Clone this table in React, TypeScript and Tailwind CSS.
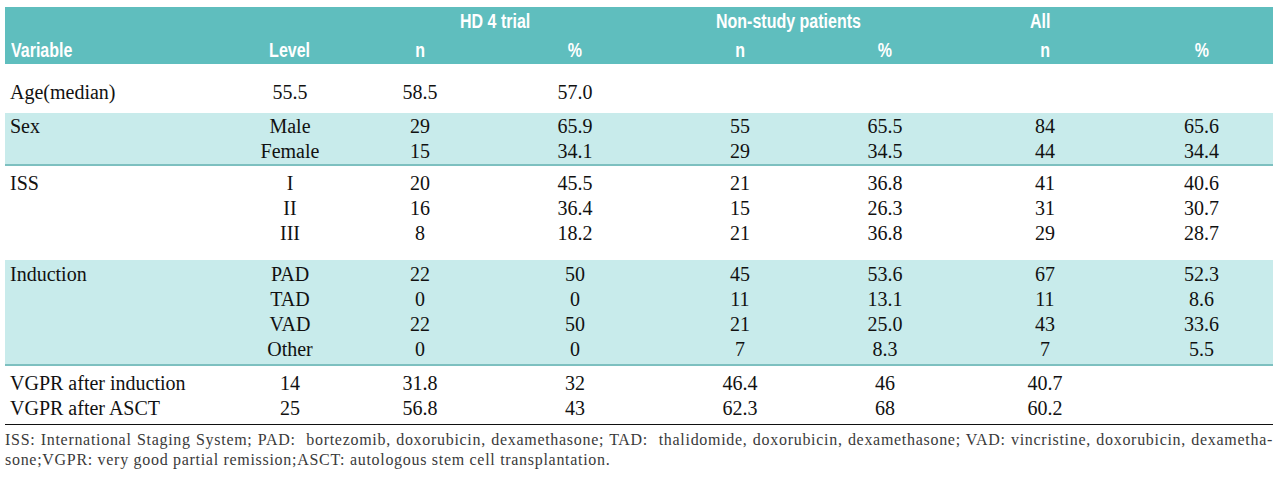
const head = "font-['Liberation_Sans','Arial',sans-serif] font-bold text-white text-[20px] leading-none";
const body = "font-['Liberation_Serif','Times_New_Roman',serif] text-[20px] text-[#111] leading-none";
const narrow = "inline-block scale-x-[0.8]";

type Row = { v?: string; cells: string[] };

const cols = ["w-[215px]", "w-[140px]", "w-[120px]", "w-[190px]", "w-[140px]", "w-[150px]", "w-[170px]", "w-[143px]"];

function Line({ r }: { r: Row }) {
  return (
    <div className="flex h-[25px] items-center">
      <div className={`${cols[0]} shrink-0 pl-[5px]`}>{r.v ?? ""}</div>
      {cols.slice(1).map((c, i) => (
        <div key={i} className={`${c} shrink-0 text-center`}>
          {r.cells[i] ?? ""}
        </div>
      ))}
    </div>
  );
}

const sex: Row[] = [
  { v: "Sex", cells: ["Male", "29", "65.9", "55", "65.5", "84", "65.6"] },
  { cells: ["Female", "15", "34.1", "29", "34.5", "44", "34.4"] },
];

const iss: Row[] = [
  { v: "ISS", cells: ["I", "20", "45.5", "21", "36.8", "41", "40.6"] },
  { cells: ["II", "16", "36.4", "15", "26.3", "31", "30.7"] },
  { cells: ["III", "8", "18.2", "21", "36.8", "29", "28.7"] },
];

const induction: Row[] = [
  { v: "Induction", cells: ["PAD", "22", "50", "45", "53.6", "67", "52.3"] },
  { cells: ["TAD", "0", "0", "11", "13.1", "11", "8.6"] },
  { cells: ["VAD", "22", "50", "21", "25.0", "43", "33.6"] },
  { cells: ["Other", "0", "0", "7", "8.3", "7", "5.5"] },
];

const vgpr: Row[] = [
  { v: "VGPR after induction", cells: ["14", "31.8", "32", "46.4", "46", "40.7"] },
  { v: "VGPR after ASCT", cells: ["25", "56.8", "43", "62.3", "68", "60.2"] },
];

export default function App() {
  return (
    <div className="w-[1280px] h-[478px] bg-white overflow-hidden pt-[7px] pl-[5px]">
      <div className="w-[1268px]">
        {/* header band */}
        <div className={`${head} bg-[#5fbebe] h-[57px] flex flex-col`}>
          <div className="flex h-[26px] items-center pt-[1px]">
            <div className="w-[455px] shrink-0" />
            <div className="w-[220px] shrink-0">
              <span className={`${narrow} origin-left`}>HD 4 trial</span>
            </div>
            <div className="w-[36px] shrink-0" />
            <div className="w-[314px] shrink-0">
              <span className={`${narrow} origin-left`}>Non-study patients</span>
            </div>
            <div>
              <span className={`${narrow} origin-left`}>All</span>
            </div>
          </div>
          <div className="flex h-[31px] items-center pt-[2px]">
            <div className={`${cols[0]} shrink-0 pl-[6px]`}>
              <span className={`${narrow} origin-left`}>Variable</span>
            </div>
            {["Level", "n", "%", "n", "%", "n", "%"].map((t, i) => (
              <div key={i} className={`${cols[i + 1]} shrink-0 text-center`}>
                <span className={narrow}>{t}</span>
              </div>
            ))}
          </div>
        </div>

        <div className={body}>
          {/* age */}
          <div className="h-[49px] pt-[15px]">
            <Line r={{ v: "Age(median)", cells: ["55.5", "58.5", "57.0"] }} />
          </div>

          <div className="bg-[#c8ebeb] pb-[1px]">
            {sex.map((r, i) => (
              <Line key={i} r={r} />
            ))}
          </div>
          <div className="h-[2px] bg-[#7dc0c0]" />

          <div className="h-[94px] pt-[4px]">
            {iss.map((r, i) => (
              <Line key={i} r={r} />
            ))}
          </div>

          <div className="bg-[#c8ebeb] h-[104px] pt-[1px]">
            {induction.map((r, i) => (
              <Line key={i} r={r} />
            ))}
          </div>
          <div className="h-[2px] bg-[#7dc0c0]" />

          <div className="h-[58px] pt-[4px]">
            {vgpr.map((r, i) => (
              <Line key={i} r={r} />
            ))}
          </div>
          <div className="h-[1px] bg-[#111]" />
        </div>

        {/* footnote */}
        <div className="font-['Liberation_Serif','Times_New_Roman',serif] text-[16px] tracking-[0.7px] leading-[20px] text-[#3a3a3a] pt-[5px]">
          <div className="text-justify [text-align-last:justify]">
            ISS: International Staging System; PAD:&nbsp; bortezomib, doxorubicin, dexamethasone; TAD:&nbsp; thalidomide, doxorubicin, dexamethasone; VAD: vincristine, doxorubicin, dexametha-
          </div>
          <div>sone;VGPR: very good partial remission;ASCT: autologous stem cell transplantation.</div>
        </div>
      </div>
    </div>
  );
}
